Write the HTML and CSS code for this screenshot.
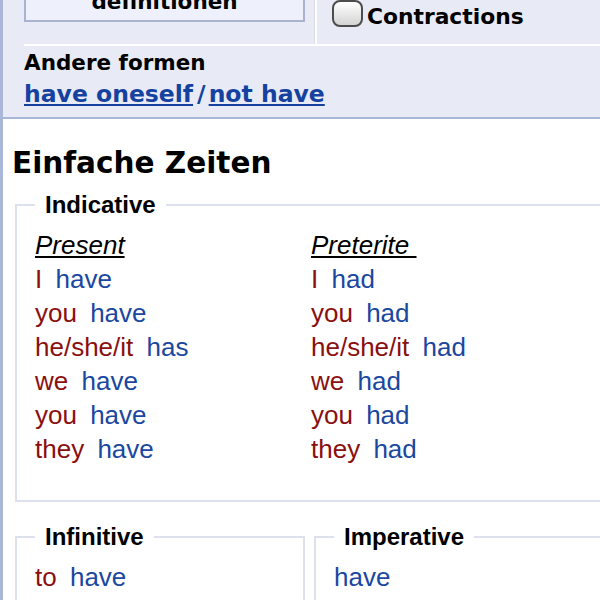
FILE: index.html
```html
<!DOCTYPE html>
<html lang="de">
<head>
<meta charset="utf-8">
<title>have - Konjugation</title>
<link rel="stylesheet" href="styles.css">
</head>
<body>
<div class="page">
  <div class="header">
    <div class="toprow">
      <div class="btncell"><div class="button">definitionen</div></div>
      <div class="chkcell">
        <input type="checkbox" class="chk" id="contr">
        <label for="contr" class="chklabel">Contractions</label>
      </div>
    </div>
    <div class="forms-title">Andere formen</div>
    <div class="forms-links"><a href="#">have oneself</a><span class="slash">/</span><a href="#">not have</a></div>
  </div>
  <div class="content">
    <h2 class="section">Einfache Zeiten</h2>
    <fieldset class="box wide">
      <legend>Indicative</legend>
      <div class="cols">
        <div class="col">
          <div class="tense">Present</div>
          <div class="row"><span class="pr">I</span> <span class="vb">have</span></div>
          <div class="row"><span class="pr">you</span> <span class="vb">have</span></div>
          <div class="row"><span class="pr">he/she/it</span> <span class="vb">has</span></div>
          <div class="row"><span class="pr">we</span> <span class="vb">have</span></div>
          <div class="row"><span class="pr">you</span> <span class="vb">have</span></div>
          <div class="row"><span class="pr">they</span> <span class="vb">have</span></div>
        </div>
        <div class="col">
          <div class="tense">Preterite&nbsp;</div>
          <div class="row"><span class="pr">I</span> <span class="vb">had</span></div>
          <div class="row"><span class="pr">you</span> <span class="vb">had</span></div>
          <div class="row"><span class="pr">he/she/it</span> <span class="vb">had</span></div>
          <div class="row"><span class="pr">we</span> <span class="vb">had</span></div>
          <div class="row"><span class="pr">you</span> <span class="vb">had</span></div>
          <div class="row"><span class="pr">they</span> <span class="vb">had</span></div>
        </div>
      </div>
    </fieldset>
    <div class="pair">
      <fieldset class="box half">
        <legend>Infinitive</legend>
        <div class="row"><span class="pr">to</span> <span class="vb">have</span></div>
      </fieldset>
      <fieldset class="box half">
        <legend>Imperative</legend>
        <div class="row"><span class="vb">have</span></div>
      </fieldset>
    </div>
  </div>
</div>
</body>
</html>
```
FILE: styles.css
```css
html, body {
  margin: 0;
  padding: 0;
  background: #ffffff;
  overflow: hidden;
}
.page {
  border-left: 3px solid #a9b8d9;
  min-height: 600px;
  width: 597px;
  overflow: hidden;
}
.header {
  background: #e8ebf6;
  border-bottom: 2px solid #a9b8d8;
  padding: 0 0 5px 21px;
  font-family: "DejaVu Sans", Verdana, sans-serif;
  font-weight: bold;
}
.toprow {
  display: flex;
  margin-top: -30px;
  height: 74px;
  border-bottom: 2px solid #ffffff;
}
.btncell {
  width: 290px;
  border-right: 1px solid #dadeeb;
}
.button {
  box-sizing: border-box;
  width: 281px;
  height: 52px;
  border: 2px solid #a9b3d0;
  background: #eef0fb;
  display: flex;
  align-items: flex-end;
  justify-content: center;
  padding-bottom: 6px;
  font-size: 21.5px;
  line-height: 24px;
  color: #000;
}
.chkcell {
  border-left: 2px solid #ffffff;
  padding: 30px 0 0 15px;
  display: flex;
  align-items: flex-start;
}
.chk {
  appearance: none;
  -webkit-appearance: none;
  box-sizing: border-box;
  width: 31px;
  height: 27px;
  margin: 0 4px 0 0;
  border: 2px solid #4c4c4c;
  border-radius: 8px;
  background: linear-gradient(#ffffff, #d4d4d4);
}
.chklabel {
  font-size: 21.8px;
  line-height: 27px;
  margin-top: 3px;
  color: #000;
}
.forms-title {
  padding-top: 4px;
  font-size: 21.5px;
  line-height: 26px;
  color: #000;
}
.forms-links {
  font-size: 23.5px;
  line-height: 36px;
  color: #1542a0;
}
.forms-links a {
  color: #1542a0;
  text-decoration: underline;
}
.slash {
  margin: 0 3px 0 4px;
}
.content {
  padding-left: 9px;
  font-family: "Liberation Sans", Arial, sans-serif;
}
.section {
  margin: 27px 0 11px 0;
  font-family: "DejaVu Sans", Verdana, sans-serif;
  font-weight: bold;
  font-size: 29.5px;
  line-height: 34px;
  color: #000;
}
.box {
  margin: 0 0 0 3px;
  border: 2px solid #dde1ee;
  padding: 9px 15px 34px 18px;
  min-width: 0;
}
.box legend {
  padding: 0 10px;
  font-weight: bold;
  font-size: 24px;
  line-height: 28px;
  color: #000;
}
.wide {
  box-sizing: border-box;
  width: 589px;
}
.cols {
  display: grid;
  grid-template-columns: 276px 276px;
}
.tense {
  display: inline-block;
  font-style: italic;
  text-decoration: underline;
  font-size: 26px;
  line-height: 34px;
  color: #000;
}
.row {
  font-size: 26px;
  line-height: 34px;
  white-space: nowrap;
}
.pr {
  color: #8a0f0f;
  margin-right: 6px;
}
.vb {
  color: #1a47a0;
}
.pair {
  display: flex;
  gap: 9px;
  margin: 21px 0 0 3px;
}
.half {
  box-sizing: border-box;
  width: 290px;
  margin: 0;
  flex: none;
}
```
